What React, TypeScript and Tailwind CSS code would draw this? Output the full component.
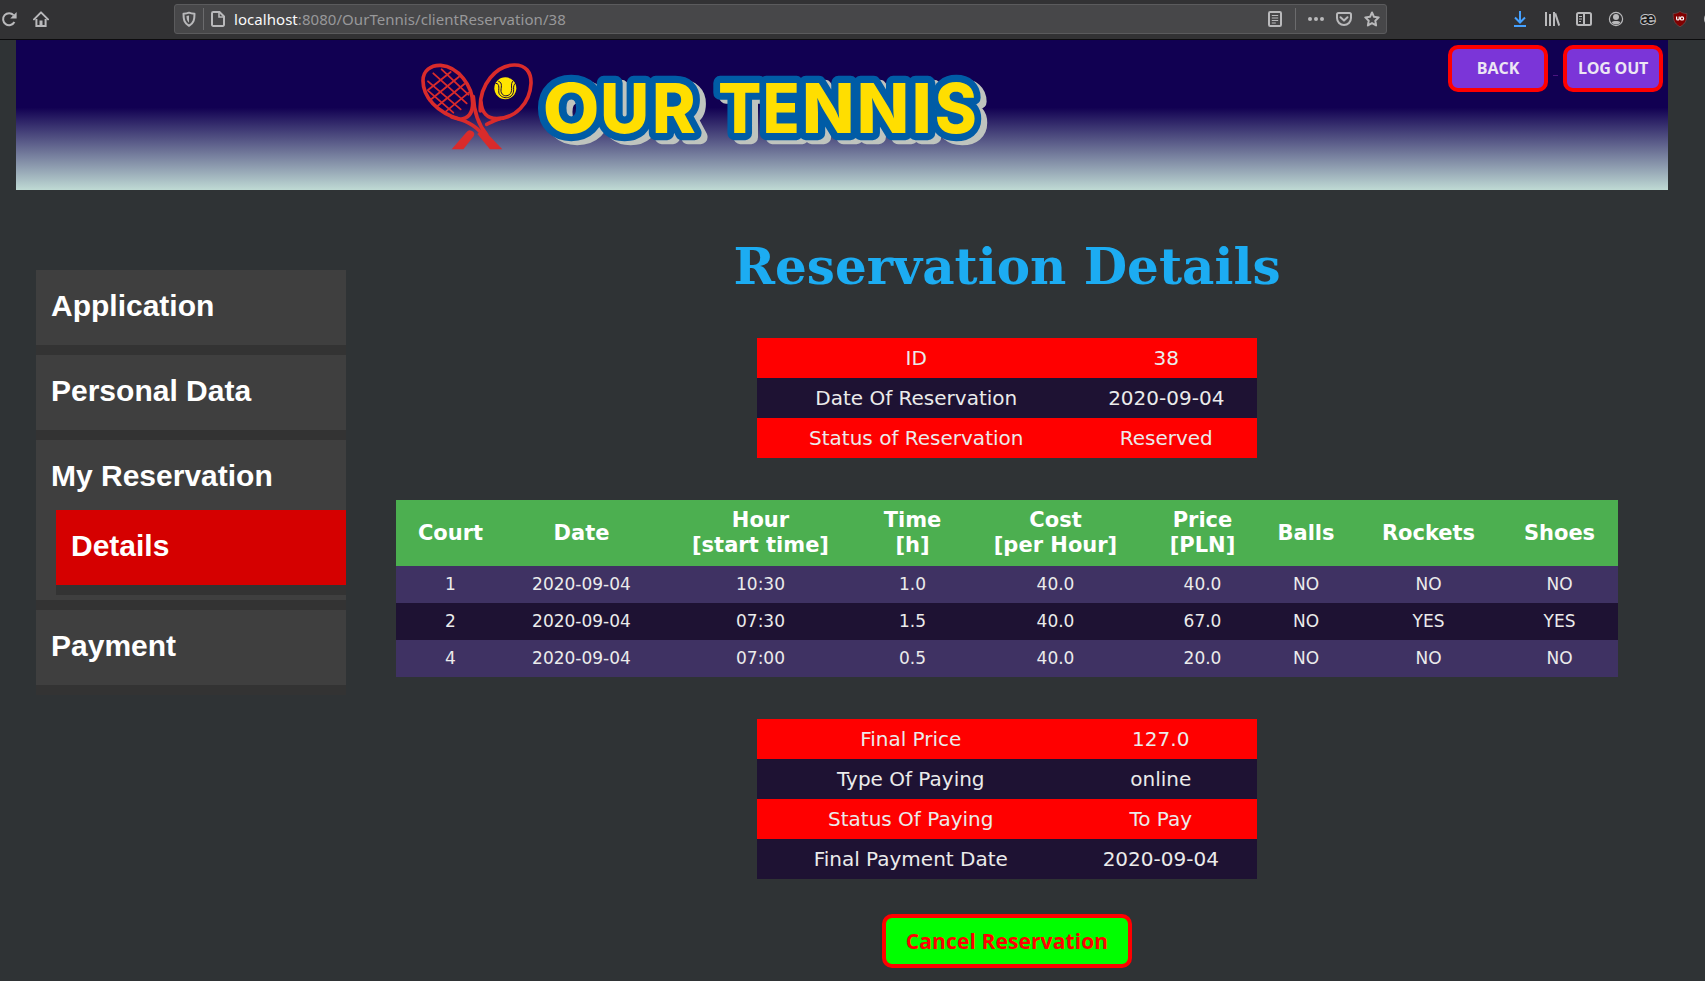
import type { ReactNode } from "react";

function Icon({ className, children, w = 16 }: { className?: string; children: ReactNode; w?: number }) {
  return (
    <svg width={w} height={16} viewBox={`0 0 ${w} 16`} fill="none" stroke="#b9b9bb" strokeWidth={2} className={`shrink-0 ${className ?? ""}`}>
      {children}
    </svg>
  );
}

function Toolbar() {
  return (
    <div className="flex h-10 shrink-0 items-start overflow-hidden border-b border-[#0c0c0d] bg-[#323234]">
      <Icon className="mt-[11px] ml-[1px]">
        <path d="M12.6 4.2A6 6 0 1 0 13.4 11" />
        <path d="M15.6 1v6.4H9.2z" fill="#b9b9bb" stroke="none" />
      </Icon>
      <Icon className="mt-[11px] ml-4">
        <path d="M1 8.4 8 1.4l7 7" strokeLinecap="round" strokeLinejoin="round" />
        <path d="M3.4 8v7h9.2V8" />
        <path d="M6.500 9.500h3V15h-3z" fill="#b9b9bb" stroke="none" />
      </Icon>
      <div className="ml-[125px] mt-1 flex h-[30px] w-[1213px] shrink-0 items-center rounded-[3px] border border-[#5b5b5d] bg-[#474749]">
        <Icon className="ml-[6px]">
          <path d="M2.500 2.800C5 2.700 6.600 2.300 8 1.700c1.400.6 3 1 5.500 1.100 0 5.500-.6 9.200-5.500 12-4.900-2.800-5.500-6.500-5.500-12z" strokeLinejoin="round" />
          <path d="M8 4.600v7.200C6 10 5.500 8 5.500 5.100z" fill="#b9b9bb" stroke="none" />
        </Icon>
        <div className="ml-[6px] h-[22px] w-px bg-[#6b6b6d]" />
        <Icon className="ml-[6px]">
          <path d="M3.200 1h6.300L14 5.500v8.300a1.200 1.200 0 0 1-1.200 1.200H3.200A1.200 1.200 0 0 1 2 13.800V2.200A1.200 1.200 0 0 1 3.200 1z" />
          <path d="M9 1v5h5" strokeWidth={1.600} />
        </Icon>
        <div className="ml-[8px] whitespace-nowrap font-['Noto_Sans'] text-[15px] tracking-[0.05px] text-[#98989a]">
          <span className="text-[#f9f9fa]">localhost</span>:8080/OurTennis/clientReservation/38
        </div>
        <Icon className="ml-auto">
          <rect x={2} y={1} width={12} height={14} rx={1.200} />
          <path d="M4.800 4.500h6.400M4.800 7h6.400M4.800 9.500h6.400M4.800 12h4" strokeWidth={1} />
        </Icon>
        <div className="ml-[12px] h-[22px] w-px bg-[#6b6b6d]" />
        <Icon className="ml-[12px]">
          <g fill="#b9b9bb" stroke="none">
            <circle cx={2} cy={8} r={2} />
            <circle cx={8} cy={8} r={2} />
            <circle cx={14} cy={8} r={2} />
          </g>
        </Icon>
        <Icon className="ml-[12px]">
          <path d="M2.500 2h11A1.500 1.500 0 0 1 15 3.500V7A7 7 0 0 1 1 7V3.500A1.500 1.500 0 0 1 2.500 2z" />
          <path d="M4.500 6.300 8 9.600l3.500-3.300" strokeLinecap="round" strokeLinejoin="round" />
        </Icon>
        <Icon className="ml-[12px] mr-[6px]">
          <path d="m8 1.500 2 4.300 4.700.6-3.400 3.300.8 4.700L8 12.100l-4.100 2.300.8-4.700L1.300 6.400 6 5.800z" strokeLinejoin="round" />
        </Icon>
      </div>
      <div className="ml-[125px] mt-[11px] flex gap-4">
        <Icon>
          <path d="M8 0v11M3 6.500l5 5 5-5M2 15h12" stroke="#45a1ff" />
        </Icon>
        <Icon>
          <path d="M2 1v14M6 3v12M10 1v14M11.200 2.400l4 12.200" />
        </Icon>
        <Icon>
          <rect x={1} y={2} width={14} height={12} rx={1.500} />
          <path d="M8 2v12" />
          <path d="M3 5.500h3M3 8h3M3 10.500h2" strokeWidth={1} />
        </Icon>
        <Icon>
          <circle cx={8} cy={8} r={6.600} strokeWidth={1.200} />
          <circle cx={8} cy={6} r={3} fill="#b9b9bb" stroke="none" />
          <path d="M3.600 11.500C5 9.600 11 9.600 12.400 11.500 10.500 14 5.500 14 3.600 11.500z" fill="#b9b9bb" stroke="none" />
        </Icon>
        <Icon className="overflow-visible">
          <text x={8} y={13} textAnchor="middle" textLength={15} lengthAdjust="spacingAndGlyphs" fontFamily="Liberation Sans" fontSize={17} fontWeight={700} fill="#1a1a1b" stroke="#c4c4c6" strokeWidth={1.800} paintOrder="stroke">æ</text>
        </Icon>
        <Icon>
          <path d="M8 .4C10 1.900 12 2.500 14.800 2.500c0 6-.6 9.700-6.800 13.300C1.800 12.200 1.200 8.500 1.200 2.500 4 2.500 6 1.900 8 .4z" fill="#800000" stroke="#6a5052" strokeWidth={0.700} />
          <path d="M4.600 5.500v2.200a1.200 1.200 0 0 0 2.600 0V5.500" stroke="#fff" strokeWidth={1.200} />
          <circle cx={10} cy={7.400} r={1.600} stroke="#fff" strokeWidth={1.200} />
        </Icon>
        <Icon>
          <circle cx={7} cy={8} r={6} />
        </Icon>
      </div>
    </div>
  );
}

/* letter, centre x, horizontal stretch */
const logoLetters: [string, number, number][] = [
  ["O", 171.200, 1.077],
  ["U", 224.700, 0.990],
  ["R", 273.800, 0.965],
  ["T", 339.700, 0.938],
  ["E", 381.200, 0.880],
  ["N", 428.200, 1],
  ["N", 483, 1],
  ["I", 521.800, 1.040],
  ["S", 555.700, 0.930],
];

function Logo() {
  return (
    <svg width={610} height={150} viewBox="0 0 610 150" className="ml-[384px] shrink-0">
      <g transform="scale(.33333)" fill="none" stroke="#d92b2b" strokeWidth={11} strokeLinecap="round">
        <path d="M180 238C110 218 69 170 69 122C69 92 92 75 122 76C175 80 218 138 218 190C218 220 205 236 180 238Z" />
        <path d="M241 213C236 130 292 76 342 75C378 74 394 98 393 130C390 190 345 236 290 236C262 236 245 218 243 185" />
        <path d="M155 231C190 240 225 252 252 288" />
        <path d="M220 170C222 215 232 250 260 284" />
        <path d="M300 236C285 240 272 247 260 253" />
        <path d="M248 266L307 328H270L232 282Z" fill="#d92b2b" stroke="none" />
        <path d="M200 276Q206 268 214 272Q226 276 222 287L190 328H155Z" fill="#d92b2b" stroke="none" />
        <g strokeWidth={5.500}>
          <path d="M125 88L205 164M100 100L200 190M84 124L182 208M84 152L160 218" />
          <path d="M152 96L84 150M177 110L88 182M193 132L110 200M206 158L138 214" />
        </g>
        <circle cx={316} cy={145} r={33} fill="#ffe500" stroke="none" />
        <g stroke="#14033f" strokeWidth={3}>
          <path d="M296 124C310 128 302 144 303 154C306 174 336 172 335 146C334 134 334 126 340 122" />
          <path d="M288 130C302 130 294 150 297 160C306 180 342 178 341 148C340 138 342 134 346 130" />
        </g>
      </g>
      <g
        className="[filter:drop-shadow(6px_4px_0px_#bfc4be)]"
        fontFamily="Inter"
        fontWeight={800}
        fontSize={68.500}
        fill="#ffde00"
        stroke="#005ca6"
        strokeWidth={14.400}
        strokeLinejoin="round"
        paintOrder="stroke"
      >
        {logoLetters.map(([ch, x, s], i) => (
          <text key={i} transform={`translate(${x} 92.7) scale(${s} 1)`} textAnchor="middle">
            {ch}
          </text>
        ))}
      </g>
    </svg>
  );
}

const headerButton =
  "h-[47px] w-[100px] rounded-[10px] border-4 border-[#ff0000] bg-[#7b35d8] pb-px font-['Open_Sans'] text-[16px] font-bold leading-none text-[#ece6f3]";

function Header() {
  return (
    <header className="ml-4 flex h-[150px] w-[1652px] bg-[linear-gradient(#110052_0%,#110052_45%,#bfdad4_100%)]">
      <Logo />
      <div className="ml-auto mr-[5px] mt-[5px] flex items-start">
        <button className={headerButton}>
          <span>BACK</span>
        </button>
        <span className="mx-[5px] mt-[30px] h-px w-[5px] bg-[#4c1580]" />
        <button className={headerButton}>
          <span className="whitespace-nowrap tracking-[-0.2px]">LOG OUT</span>
        </button>
      </div>
    </header>
  );
}

const menuItem = "h-[75px] pl-[15px] pt-[18px] font-['Liberation_Sans'] text-[30px] leading-[35px] font-bold text-white";

function Sidebar() {
  return (
    <nav className="ml-9 mt-20 flex w-[310px] shrink-0 flex-col gap-[10px] self-start bg-[#333333] pb-[10px]">
      <div className={`${menuItem} bg-[#3f3f3f]`}>Application</div>
      <div className={`${menuItem} bg-[#3f3f3f]`}>Personal Data</div>
      <div className="h-[160px] bg-[#3f3f3f]">
        <div className="h-[70px] pl-[15px] pt-[18px] font-['Liberation_Sans'] text-[30px] leading-[35px] font-bold text-white">My Reservation</div>
        <div className="ml-5 bg-[#333333] pb-[10px]">
          <div className={`${menuItem} bg-[#d50000]`}>Details</div>
        </div>
      </div>
      <div className={`${menuItem} bg-[#3f3f3f]`}>Payment</div>
    </nav>
  );
}

function SummaryTable({ rows, columns }: { rows: [string, string][]; columns: string }) {
  return (
    <div className="w-[500px] text-[20px] leading-6 text-[#ebebeb]">
      {rows.map(([label, value], i) => (
        <div key={label} className={`grid h-10 items-center text-center ${columns} ${i % 2 ? "bg-[#1e1233]" : "bg-[#ff0000]"}`}>
          <div>{label}</div>
          <div>{value}</div>
        </div>
      ))}
    </div>
  );
}

const courtHeads = ["Court", "Date", "Hour\n[start time]", "Time\n[h]", "Cost\n[per Hour]", "Price\n[PLN]", "Balls", "Rockets", "Shoes"];
const courtRows = [
  ["1", "2020-09-04", "10:30", "1.0", "40.0", "40.0", "NO", "NO", "NO"],
  ["2", "2020-09-04", "07:30", "1.5", "40.0", "67.0", "NO", "YES", "YES"],
  ["4", "2020-09-04", "07:00", "0.5", "40.0", "20.0", "NO", "NO", "NO"],
];
const courtGrid = "grid grid-cols-[109px_153px_205px_99px_187px_107px_100px_145px_117px] items-center text-center";

function CourtTable() {
  return (
    <div className="w-[1222px]">
      <div className={`${courtGrid} h-[66px] bg-[#4caf50] text-[21px] leading-[25px] font-bold text-white`}>
        {courtHeads.map((h) => (
          <div key={h} className="whitespace-pre">{h}</div>
        ))}
      </div>
      {courtRows.map((row, i) => (
        <div key={i} className={`${courtGrid} h-[37px] pb-px text-[17px] leading-5 text-[#ebebeb] ${i % 2 ? "bg-[#1e1233]" : "bg-[#3f3263]"}`}>
          {row.map((c, j) => (
            <div key={j}>{c}</div>
          ))}
        </div>
      ))}
    </div>
  );
}

export default function App() {
  return (
    <div className="flex h-[981px] w-[1705px] flex-col overflow-hidden bg-[#2f3335] font-['DejaVu_Sans',sans-serif]">
      <Toolbar />
      <Header />
      <div className="flex">
        <Sidebar />
        <main className="ml-[50px] flex w-[1222px] flex-col items-center">
          <h1 className="mt-[48px] h-[58px] font-['DejaVu_Serif'] text-[50px] leading-[58px] font-bold whitespace-nowrap text-[#1cacf2]">Reservation Details</h1>
          <div className="mt-[42px]">
            <SummaryTable
              columns="grid-cols-[318.5px_181.5px]"
              rows={[
                ["ID", "38"],
                ["Date Of Reservation", "2020-09-04"],
                ["Status of Reservation", "Reserved"],
              ]}
            />
          </div>
          <div className="mt-[42px]">
            <CourtTable />
          </div>
          <div className="mt-[42px]">
            <SummaryTable
              columns="grid-cols-[307.5px_192.5px]"
              rows={[
                ["Final Price", "127.0"],
                ["Type Of Paying", "online"],
                ["Status Of Paying", "To Pay"],
                ["Final Payment Date", "2020-09-04"],
              ]}
            />
          </div>
          <button className="mt-[35px] h-[54px] w-[250px] rounded-[10px] border-4 border-[#ff0000] bg-[#00ff00] font-['Open_Sans'] text-[21px] leading-none font-bold tracking-[0.1px] whitespace-nowrap text-[#ff0000]">
            Cancel Reservation
          </button>
        </main>
      </div>
    </div>
  );
}
